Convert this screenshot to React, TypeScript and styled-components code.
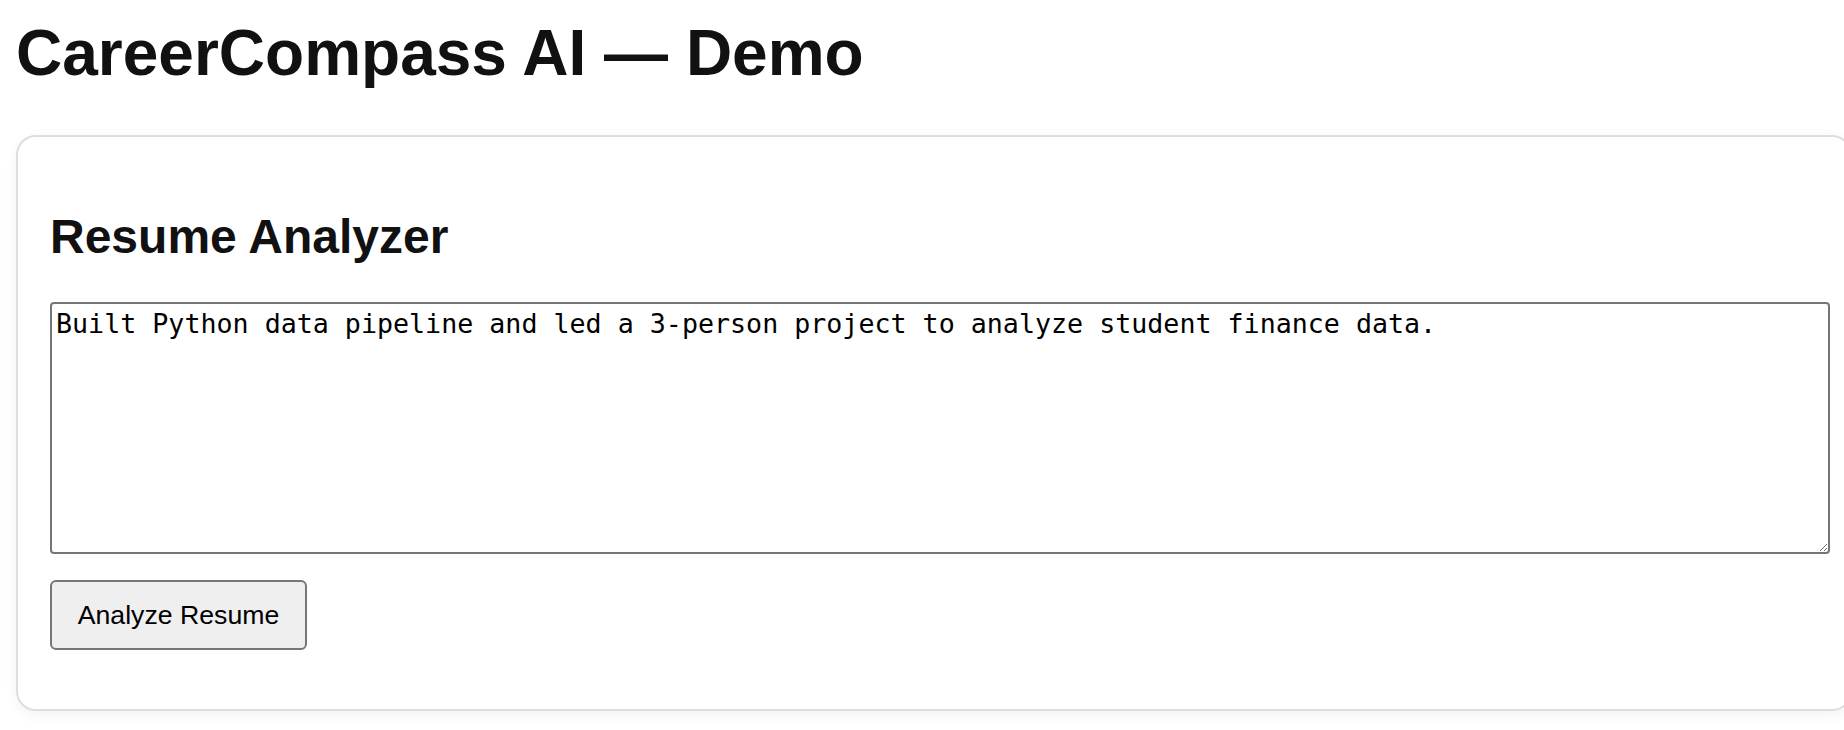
import React from "react";
import styled, { createGlobalStyle } from "styled-components";

const GlobalStyle = createGlobalStyle`
  html, body {
    margin: 0;
    padding: 0;
    background: #ffffff;
    overflow: hidden;
  }
  body {
    font-family: "Liberation Sans", Arial, Helvetica, sans-serif;
    color: #111111;
  }
`;

const Page = styled.main`
  padding: 16px 0 16px 16px;
  width: 1852px;
  box-sizing: border-box;
`;

const Title = styled.h1`
  margin: 0 0 45px;
  font-size: 64px;
  font-weight: 700;
  line-height: normal;
  color: #111111;
`;

const Card = styled.section`
  box-sizing: border-box;
  width: 1836px;
  padding: 32px 32px 59px;
  border: 2px solid #dedede;
  border-radius: 20px;
  background: #ffffff;
  box-shadow: 0 4px 14px rgba(0, 0, 0, 0.05);
  display: flex;
  flex-direction: column;
  align-items: flex-start;
`;

const SectionTitle = styled.h2`
  margin: 40px 0 38px;
  font-size: 48px;
  font-weight: 700;
  line-height: normal;
  color: #111111;
`;

const ResumeInput = styled.textarea`
  box-sizing: border-box;
  display: block;
  width: 1780px;
  height: 252px;
  margin: 0;
  padding: 4px;
  border: 2px solid #767676;
  border-radius: 4px;
  font-family: "DejaVu Sans Mono", "Liberation Mono", monospace;
  font-size: 26.67px;
  line-height: normal;
  color: #000000;
  background: #ffffff;
  resize: both;
  outline: none;
`;

const ActionButton = styled.button`
  box-sizing: border-box;
  margin-top: 26px;
  width: 257px;
  height: 70px;
  padding: 0;
  border: 2px solid #767676;
  border-radius: 6px;
  background: #efefef;
  color: #000000;
  font-family: "Liberation Sans", Arial, Helvetica, sans-serif;
  font-size: 26.67px;
  white-space: nowrap;
  text-align: center;
  cursor: pointer;
`;

export default function App() {
  return (
    <>
      <GlobalStyle />
      <Page>
        <Title>CareerCompass AI — Demo</Title>
        <Card>
          <SectionTitle>Resume Analyzer</SectionTitle>
          <ResumeInput
            defaultValue="Built Python data pipeline and led a 3-person project to analyze student finance data."
          />
          <ActionButton type="button">Analyze Resume</ActionButton>
        </Card>
      </Page>
    </>
  );
}
